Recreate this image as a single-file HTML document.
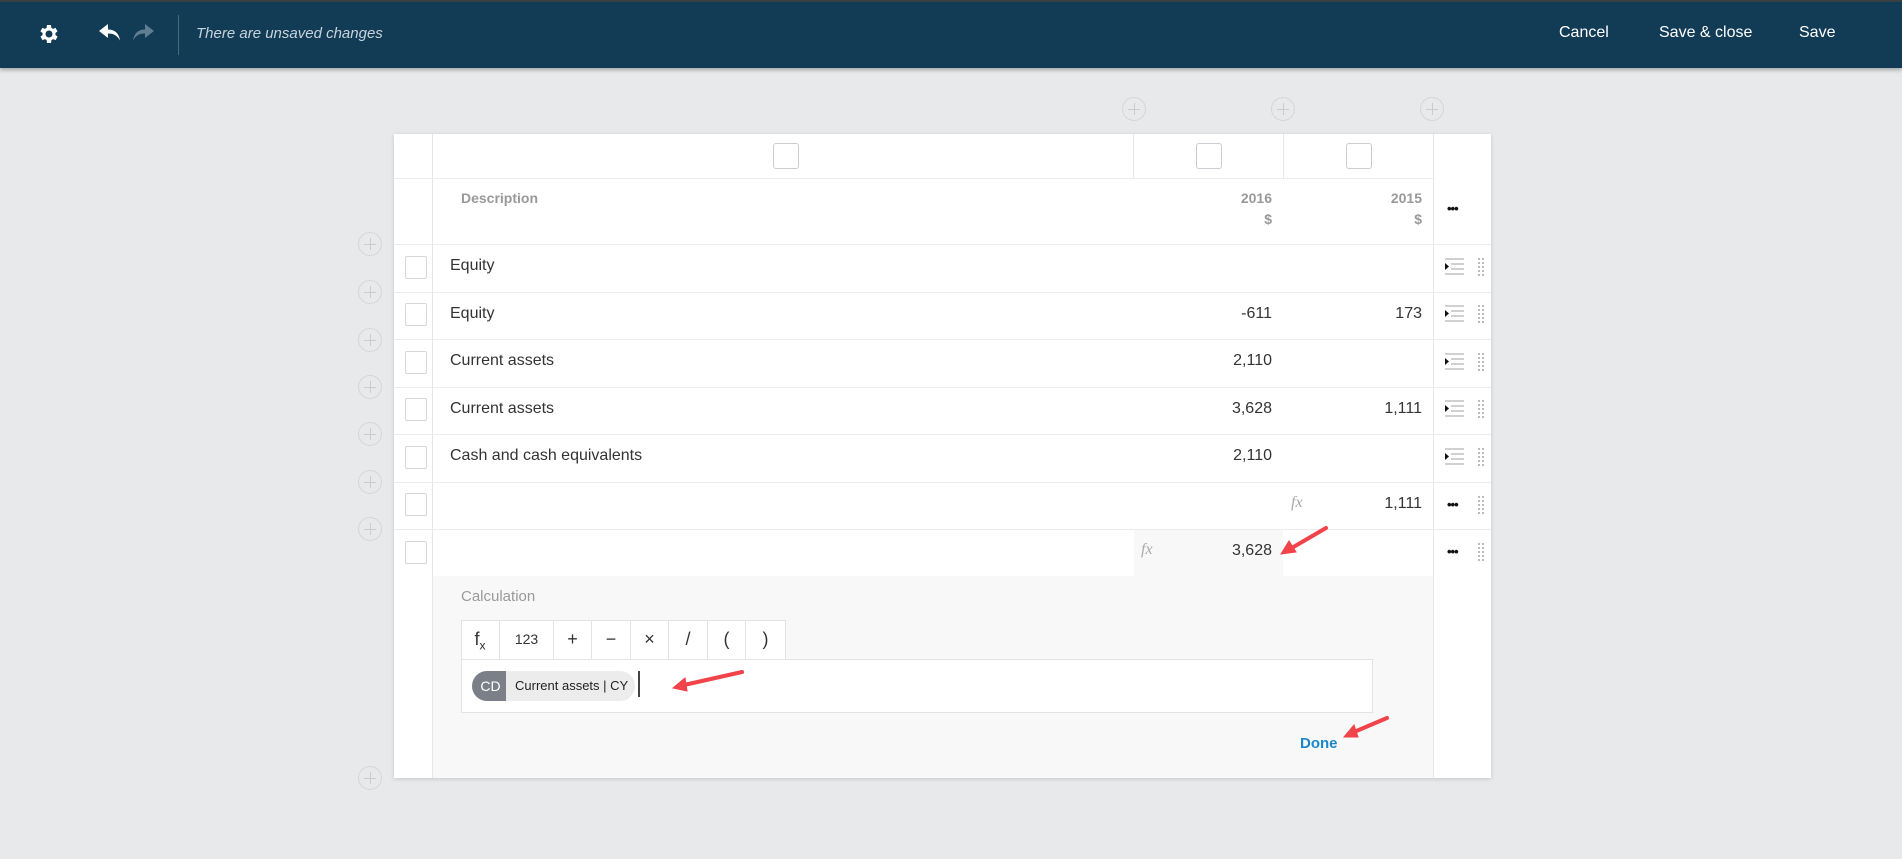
<!DOCTYPE html>
<html><head><meta charset="utf-8"><style>
*{box-sizing:border-box;margin:0;padding:0}
body{width:1902px;height:859px;background:#e8e9eb;font-family:"Liberation Sans",sans-serif;position:relative;overflow:hidden}
.a{position:absolute}
.hdr{left:0;top:0;width:1902px;height:68px;background:#123c56;border-top:2px solid #3a3f41;box-shadow:0 2px 4px rgba(0,0,0,.3)}
.hb{color:#fff;font-size:16px;top:24px}
.card{left:394px;top:134px;width:1097px;height:644px;background:#fff;box-shadow:0 1px 4px rgba(0,0,0,.15)}
.hl{height:1px;background:#ececec}
.vl{width:1px;background:#e6e6e6}
.cb{width:22px;height:23px;border:1px solid #d5d8dc;border-radius:2px;background:#fff}
.cb2{width:26px;height:26px;border:1px solid #c9ccd0;border-radius:3px;background:#fff}
.pl{width:24px;height:24px;border:1px solid #d4d6d9;border-radius:50%}
.pl:before{content:"";position:absolute;left:5px;top:11px;width:12px;height:1px;background:#ccc}
.pl:after{content:"";position:absolute;left:11px;top:5px;width:1px;height:12px;background:#ccc}
.t{font-size:16px;color:#333}
.n{font-size:16px;color:#333;text-align:right;width:140px}
.hd{font-size:14px;color:#999;font-weight:bold}
.fx{font-family:"Liberation Serif",serif;font-style:italic;color:#aaa;font-size:16px}
.dots{font-size:13px;color:#111;letter-spacing:-1px;font-weight:bold}
.tb{top:620px;height:40px;border-right:1px solid #e3e3e3;text-align:center;line-height:38px;font-size:18px;color:#333}
</style></head><body>
<div class="a hdr"></div>
<svg class="a" style="left:36px;top:22px" width="24" height="24" viewBox="0 0 24 24"><path fill="#fff" d="M19.4 13a7.5 7.5 0 0 0 0-2l2.1-1.6-2-3.5-2.5 1a7 7 0 0 0-1.700-1L15 3h-4l-.4 2.9a7 7 0 0 0-1.7 1l-2.5-1-2 3.5L6.6 11a7.5 7.5 0 0 0 0 2l-2.1 1.6 2 3.5 2.5-1a7 7 0 0 0 1.7 1L11 21h4l.4-2.9a7 7 0 0 0 1.7-1l2.5 1 2-3.5zM13 15.5a3.5 3.5 0 1 1 0-7 3.5 3.5 0 0 1 0 7z"/></svg>
<svg class="a" style="left:99px;top:24px" width="22" height="18" viewBox="0 0 22 18"><path fill="#fff" d="M9 0L0 7l9 7V9.5c6 0 9 2 12 7-1-7-5-11-12-11z"/></svg>
<svg class="a" style="left:132px;top:24px" width="22" height="18" viewBox="0 0 22 18"><path fill="#5e7d92" d="M13 0l9 7-9 7V9.5c-6 0-9 2-12 7 1-7 5-11 12-11z"/></svg>
<div class="a" style="left:178px;top:15px;width:1px;height:40px;background:#4a6a7f"></div>
<div class="a" style="left:196px;top:25px;font-size:15px;font-style:italic;color:#c8d3dc">There are unsaved changes</div>
<div class="a hb" style="left:1559px">Cancel</div>
<div class="a hb" style="left:1659px">Save &amp; close</div>
<div class="a hb" style="left:1799px">Save</div>

<div class="a pl" style="left:1122px;top:97px"></div>
<div class="a pl" style="left:1271px;top:97px"></div>
<div class="a pl" style="left:1420px;top:97px"></div>
<div class="a pl" style="left:358px;top:232px"></div>
<div class="a pl" style="left:358px;top:280px"></div>
<div class="a pl" style="left:358px;top:328px"></div>
<div class="a pl" style="left:358px;top:375px"></div>
<div class="a pl" style="left:358px;top:422px"></div>
<div class="a pl" style="left:358px;top:470px"></div>
<div class="a pl" style="left:358px;top:517px"></div>
<div class="a pl" style="left:358px;top:766px"></div>

<div class="a card"></div>
<div class="a" style="left:432px;top:576px;width:1001px;height:202px;background:#f8f8f8"></div>
<div class="a" style="left:1134px;top:529px;width:149px;height:47px;background:#f8f8f8"></div>
<div class="a vl" style="left:432px;top:134px;height:644px"></div>
<div class="a vl" style="left:1133px;top:134px;height:44px"></div>
<div class="a vl" style="left:1283px;top:134px;height:44px"></div>
<div class="a vl" style="left:1433px;top:134px;height:644px"></div>
<div class="a hl" style="left:394px;top:178px;width:1039px"></div>
<div class="a hl" style="left:394px;top:244px;width:1097px"></div>
<div class="a hl" style="left:394px;top:292px;width:1097px"></div>
<div class="a hl" style="left:394px;top:339px;width:1097px"></div>
<div class="a hl" style="left:394px;top:387px;width:1097px"></div>
<div class="a hl" style="left:394px;top:434px;width:1097px"></div>
<div class="a hl" style="left:394px;top:482px;width:1097px"></div>
<div class="a hl" style="left:394px;top:529px;width:1097px"></div>

<div class="a cb2" style="left:773px;top:143px"></div>
<div class="a cb2" style="left:1196px;top:143px"></div>
<div class="a cb2" style="left:1346px;top:143px"></div>

<div class="a hd" style="left:461px;top:190px">Description</div>
<div class="a hd" style="left:1132px;top:190px;width:140px;text-align:right">2016<br><span style="line-height:26px">$</span></div>
<div class="a hd" style="left:1282px;top:190px;width:140px;text-align:right">2015<br><span style="line-height:26px">$</span></div>
<div class="a dots" style="left:1447px;top:201px">•••</div>

<div class="a cb" style="left:405px;top:256px"></div><div class="a t" style="left:450px;top:257px">Equity</div>
<div class="a cb" style="left:405px;top:303px"></div><div class="a t" style="left:450px;top:305px">Equity</div>
<div class="a n" style="left:1132px;top:305px">-611</div><div class="a n" style="left:1282px;top:305px">173</div>
<div class="a cb" style="left:405px;top:351px"></div><div class="a t" style="left:450px;top:352px">Current assets</div>
<div class="a n" style="left:1132px;top:352px">2,110</div>
<div class="a cb" style="left:405px;top:398px"></div><div class="a t" style="left:450px;top:400px">Current assets</div>
<div class="a n" style="left:1132px;top:400px">3,628</div><div class="a n" style="left:1282px;top:400px">1,111</div>
<div class="a cb" style="left:405px;top:446px"></div><div class="a t" style="left:450px;top:447px">Cash and cash equivalents</div>
<div class="a n" style="left:1132px;top:447px">2,110</div>
<div class="a cb" style="left:405px;top:493px"></div>
<div class="a fx" style="left:1291px;top:494px">fx</div><div class="a n" style="left:1282px;top:495px">1,111</div>
<div class="a cb" style="left:405px;top:541px"></div>
<div class="a fx" style="left:1141px;top:541px">fx</div><div class="a n" style="left:1132px;top:542px">3,628</div>

<svg class="a" width="0" height="0"><defs><g id="ind"><rect x="0" y="0" width="19" height="2" fill="#d0d0d0"/><rect x="6" y="5" width="13" height="2" fill="#d0d0d0"/><rect x="6" y="10" width="13" height="2" fill="#d0d0d0"/><rect x="0" y="15" width="19" height="2" fill="#d0d0d0"/><path d="M0 5l4 3.5L0 12z" fill="#111"/></g><g id="drg" fill="#bbb"><rect x="0" y="0" width="2" height="2"/><rect x="4" y="0" width="2" height="2"/><rect x="0" y="4" width="2" height="2"/><rect x="4" y="4" width="2" height="2"/><rect x="0" y="8" width="2" height="2"/><rect x="4" y="8" width="2" height="2"/><rect x="0" y="12" width="2" height="2"/><rect x="4" y="12" width="2" height="2"/><rect x="0" y="16" width="2" height="2"/><rect x="4" y="16" width="2" height="2"/></g></defs></svg>
<svg class="a" style="left:1445px;top:258px" width="45" height="20"><use href="#ind"/><use href="#drg" x="33"/></svg>
<svg class="a" style="left:1445px;top:305px" width="45" height="20"><use href="#ind"/><use href="#drg" x="33"/></svg>
<svg class="a" style="left:1445px;top:353px" width="45" height="20"><use href="#ind"/><use href="#drg" x="33"/></svg>
<svg class="a" style="left:1445px;top:400px" width="45" height="20"><use href="#ind"/><use href="#drg" x="33"/></svg>
<svg class="a" style="left:1445px;top:448px" width="45" height="20"><use href="#ind"/><use href="#drg" x="33"/></svg>
<div class="a dots" style="left:1447px;top:497px">•••</div>
<svg class="a" style="left:1478px;top:496px" width="8" height="20"><use href="#drg"/></svg>
<div class="a dots" style="left:1447px;top:544px">•••</div>
<svg class="a" style="left:1478px;top:543px" width="8" height="20"><use href="#drg"/></svg>

<div class="a" style="left:461px;top:588px;font-size:15px;color:#999">Calculation</div>
<div class="a" style="left:461px;top:620px;width:325px;height:40px;background:#fff;border:1px solid #e3e3e3;border-bottom:none"></div>
<div class="a tb" style="left:461px;width:39px">f<sub style="font-size:12px">x</sub></div>
<div class="a tb" style="left:500px;width:54px;font-size:14px">123</div>
<div class="a tb" style="left:554px;width:38px">+</div>
<div class="a tb" style="left:592px;width:39px">−</div>
<div class="a tb" style="left:631px;width:38px">×</div>
<div class="a tb" style="left:669px;width:39px">/</div>
<div class="a tb" style="left:708px;width:38px">(</div>
<div class="a tb" style="left:746px;width:39px;border-right:none">)</div>
<div class="a" style="left:461px;top:659px;width:912px;height:54px;background:#fff;border:1px solid #e3e3e3"></div>
<div class="a" style="left:472px;top:671px;width:163px;height:30px;border-radius:15px;background:#ececec;overflow:hidden">
<div class="a" style="left:0;top:0;width:34px;height:30px;background:#7b8088;color:#fff;font-size:14px;line-height:30px;text-align:center;padding-left:3px">CD</div>
<div class="a" style="left:43px;top:0;font-size:13px;line-height:30px;color:#222">Current assets | CY</div></div>
<div class="a" style="left:638px;top:671px;width:2px;height:26px;background:#444"></div>
<div class="a" style="left:1300px;top:735px;font-size:15px;font-weight:bold;color:#1b87c9">Done</div>

<svg class="a" style="left:0;top:0" width="1902" height="859">
<g stroke="#f0434a" stroke-width="4" stroke-linecap="round" fill="#f0434a">
<line x1="1326" y1="528" x2="1290" y2="549"/><path d="M1281 554l8-13 7 11z" stroke-width="1"/>
<line x1="742" y1="672" x2="684" y2="685"/><path d="M673 688l12-10 2 13z" stroke-width="1"/>
<line x1="1387" y1="718" x2="1354" y2="732"/><path d="M1344 737l10-12 4 12z" stroke-width="1"/>
</g></svg>
</body></html>
